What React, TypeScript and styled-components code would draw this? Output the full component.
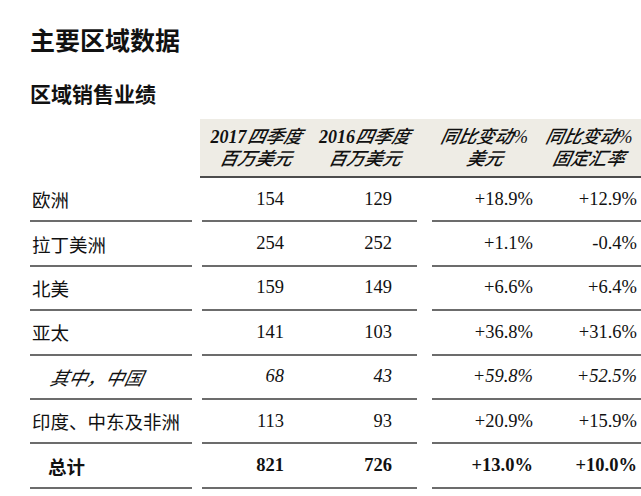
import React from "react";
import styled, { createGlobalStyle } from "styled-components";

const GlobalStyle = createGlobalStyle`
  html, body { margin: 0; padding: 0; background: #ffffff; }
  body {
    font-family: "Liberation Serif", "Noto Sans CJK SC", serif;
    color: #111111;
  }
`;

const Page = styled.div`
  width: 641px;
  height: 496px;
  overflow: hidden;
  box-sizing: border-box;
  padding: 23px 0 0 30px;
`;

const Title = styled.h1`
  margin: 0;
  font: 700 25px/32px "Noto Sans CJK SC", sans-serif;
  color: #111;
`;

const Subtitle = styled.h2`
  margin: 24px 0 12px;
  font: 700 21px/28px "Noto Sans CJK SC", sans-serif;
  color: #111;
`;

const Table = styled.div`
  display: grid;
  grid-template-columns: 170px 112px 105px 120px 104px;
  grid-template-rows: 59px;
  grid-auto-rows: 44.4px;
`;

const Blank = styled.div``;

const HeadCell = styled.div<{ $padLeft?: number }>`
  background: #eeece5;
  border-bottom: 2px solid #4c4c4c;
  padding-left: ${(p) => p.$padLeft ?? 0}px;
  display: flex;
  flex-direction: column;
  align-items: center;
  justify-content: center;
  font-family: "Liberation Serif", "Noto Sans CJK SC", serif;
  font-style: italic;
  font-weight: 500;
  font-size: 18px;
  line-height: 22px;
  white-space: nowrap;
`;

const HeadLine = styled.span`
  display: block;
`;

const Year = styled.span`
  font-weight: 700;
  margin-right: 1px;
`;

const Oblique = styled.span`
  display: inline-block;
  transform: skewX(-12deg);
`;

type Variant = "normal" | "sub" | "total";

const labelIndent: Record<Variant, number> = { normal: 2, sub: 21, total: 18 };

const LabelCell = styled.div<{ $variant: Variant }>`
  margin-right: 8px;
  border-bottom: 2px solid #6c6c6c;
  display: flex;
  align-items: center;
  padding-left: ${(p) => labelIndent[p.$variant]}px;
  font-size: 18.5px;
  font-style: ${(p) => (p.$variant === "sub" ? "italic" : "normal")};
  font-weight: ${(p) => (p.$variant === "total" ? 700 : 400)};
  white-space: nowrap;
`;

const NumCell = styled.div<{ $variant: Variant; $marginLeft?: number; $padRight: number }>`
  margin-left: ${(p) => p.$marginLeft ?? 0}px;
  border-bottom: 2px solid #6c6c6c;
  display: flex;
  align-items: center;
  justify-content: flex-end;
  padding-right: ${(p) => p.$padRight}px;
  font-size: 18.5px;
  font-style: ${(p) => (p.$variant === "sub" ? "italic" : "normal")};
  font-weight: ${(p) => (p.$variant === "total" ? 700 : 400)};
  white-space: nowrap;
`;

const rows: { label: string; v: [string, string, string, string]; variant: Variant }[] = [
  { label: "欧洲", v: ["154", "129", "+18.9%", "+12.9%"], variant: "normal" },
  { label: "拉丁美洲", v: ["254", "252", "+1.1%", "-0.4%"], variant: "normal" },
  { label: "北美", v: ["159", "149", "+6.6%", "+6.4%"], variant: "normal" },
  { label: "亚太", v: ["141", "103", "+36.8%", "+31.6%"], variant: "normal" },
  { label: "其中，中国", v: ["68", "43", "+59.8%", "+52.5%"], variant: "sub" },
  { label: "印度、中东及非洲", v: ["113", "93", "+20.9%", "+15.9%"], variant: "normal" },
  { label: "总计", v: ["821", "726", "+13.0%", "+10.0%"], variant: "total" },
];

export default function App() {
  return (
    <>
      <GlobalStyle />
      <Page>
        <Title>主要区域数据</Title>
        <Subtitle>区域销售业绩</Subtitle>
        <Table>
          <Blank />
          <HeadCell>
            <HeadLine>
              <Year>2017</Year>
              <Oblique>四季度</Oblique>
            </HeadLine>
            <HeadLine>
              <Oblique>百万美元</Oblique>
            </HeadLine>
          </HeadCell>
          <HeadCell>
            <HeadLine>
              <Year>2016</Year>
              <Oblique>四季度</Oblique>
            </HeadLine>
            <HeadLine>
              <Oblique>百万美元</Oblique>
            </HeadLine>
          </HeadCell>
          <HeadCell $padLeft={15}>
            <HeadLine>
              <Oblique>同比变动</Oblique>%
            </HeadLine>
            <HeadLine>
              <Oblique>美元</Oblique>
            </HeadLine>
          </HeadCell>
          <HeadCell>
            <HeadLine>
              <Oblique>同比变动</Oblique>%
            </HeadLine>
            <HeadLine>
              <Oblique>固定汇率</Oblique>
            </HeadLine>
          </HeadCell>
          {rows.map((r) => (
            <React.Fragment key={r.label}>
              <LabelCell $variant={r.variant}>
                {r.variant === "sub" ? <Oblique>{r.label}</Oblique> : r.label}
              </LabelCell>
              <NumCell $variant={r.variant} $marginLeft={2} $padRight={28}>
                {r.v[0]}
              </NumCell>
              <NumCell $variant={r.variant} $padRight={25}>
                {r.v[1]}
              </NumCell>
              <NumCell $variant={r.variant} $marginLeft={15} $padRight={4}>
                {r.v[2]}
              </NumCell>
              <NumCell $variant={r.variant} $padRight={4}>
                {r.v[3]}
              </NumCell>
            </React.Fragment>
          ))}
        </Table>
      </Page>
    </>
  );
}
